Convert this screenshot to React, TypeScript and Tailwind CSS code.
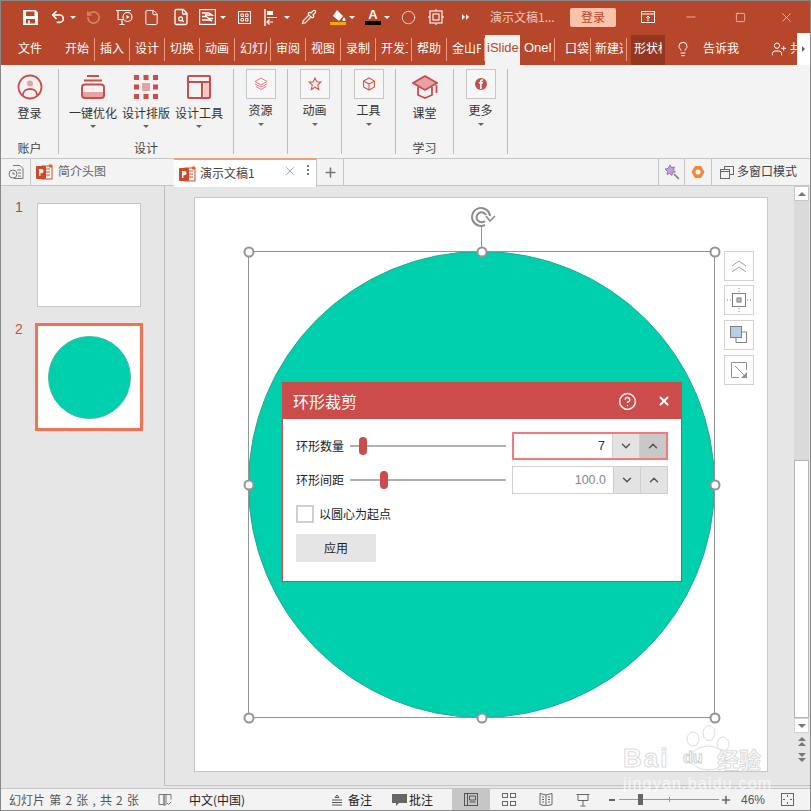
import React from 'react';
import { Undo2, RotateCcw, File, Pipette, Lightbulb, UserPlus, X, Minus, Square, Plus, ChevronDown, ChevronUp, CircleHelp, FileSearch, Circle } from 'lucide-react';

const font = 'font-["Noto_Sans_CJK_SC","Liberation_Sans",sans-serif]';
const latin = "font-['Liberation_Sans',sans-serif]";

const tabs = [
  { name: '开始', w: 'w-[35px]', clip: 'w-[24px]' },
  { name: '插入', w: 'w-[35px]', clip: 'w-[24px]' },
  { name: '设计', w: 'w-[35px]', clip: 'w-[24px]' },
  { name: '切换', w: 'w-[35px]', clip: 'w-[24px]' },
  { name: '动画', w: 'w-[35px]', clip: 'w-[24px]' },
  { name: '幻灯片', w: 'w-[36px]', clip: 'w-[27px]' },
  { name: '审阅', w: 'w-[35px]', clip: 'w-[24px]' },
  { name: '视图', w: 'w-[35px]', clip: 'w-[24px]' },
  { name: '录制', w: 'w-[35px]', clip: 'w-[24px]' },
  { name: '开发工具', w: 'w-[36px]', clip: 'w-[27px]' },
  { name: '帮助', w: 'w-[35px]', clip: 'w-[24px]' },
  { name: '金山PDF', w: 'w-[38px]', clip: 'w-[29px]' },
];

function Caret({ className = 'border-t-[#fff]' }: { className?: string }) {
  return <span className={`w-0 h-0 border-x-[3px] border-x-transparent border-t-[3px] ${className}`} />;
}

function QuickIcon({ className = '', children }: { className?: string; children?: React.ReactNode }) {
  return (
    <div className={`flex items-center justify-center w-[14px] h-full shrink-0 [&>*]:shrink-0 ${className}`}>
      {children}
    </div>
  );
}

function TitleBar() {
  return (
    <div className="flex items-center h-[32px] pl-[22px] bg-[#b7472a] text-white shrink-0">
      <QuickIcon>
        <svg width="15" height="15" viewBox="0 0 15 15" fill="white" fillRule="evenodd">
          <path d="M0 0h12.500L15 2.500V15H0zM3 1.500V6h8.500V1.500zM3 9v4.500h9V9z" />
          <rect x="5" y="10.500" width="2" height="3" />
        </svg>
      </QuickIcon>
      <QuickIcon className="ml-[14px]"><Undo2 size={16} strokeWidth={2.5} /></QuickIcon>
      <QuickIcon className="ml-[1px]"><Caret /></QuickIcon>
      <QuickIcon className="ml-[6px]"><RotateCcw size={15} strokeWidth={2.6} className="text-[#d5846e]" /></QuickIcon>
      <QuickIcon className="ml-[17px]">
        <svg width="17" height="17" viewBox="0 0 17 17" fill="none" stroke="white" strokeWidth="1.100">
          <path d="M0 1.500h15M2 1.500v9h6M6 10.500v5M3.500 15.500h5" />
          <circle cx="11.500" cy="8" r="4.500" fill="#b7472a" />
          <path d="M10.500 6l3 2-3 2z" fill="white" stroke="none" />
        </svg>
      </QuickIcon>
      <QuickIcon className="ml-[13px]"><File size={17} strokeWidth={1.4} /></QuickIcon>
      <QuickIcon className="ml-[16px]"><FileSearch size={18} strokeWidth={1.7} /></QuickIcon>
      <QuickIcon className="ml-[12px]">
        <svg width="17" height="16" viewBox="0 0 17 16" fill="none" stroke="white" strokeWidth="1.200">
          <rect x=".6" y=".6" width="15.800" height="14.800" />
          <path d="M3 4h7l3 2H6M3 7.500h4l3 2H14M3 11h8l2 1" strokeWidth="1.400" />
        </svg>
      </QuickIcon>
      <QuickIcon className="ml-[2px]"><Caret /></QuickIcon>
      <QuickIcon className="ml-[7px]">
        <svg width="13" height="13" viewBox="0 0 13 13" fill="none" stroke="white">
          <rect x=".5" y=".5" width="12" height="12" />
          <path d="M3 3h2.500v2.500H3zM7.500 3H10v2.500H7.500zM3 7.500h2.500V10H3zM7.500 7.500H10V10H7.500z" />
        </svg>
      </QuickIcon>
      <QuickIcon className="ml-[12px]">
        <svg width="13" height="17" viewBox="0 0 13 17" fill="none" stroke="white">
          <path d="M1 0v17" strokeWidth="1.400" />
          <path d="M3 2h6v4H3zM3 8h10v1H3z" fill="white" stroke="none" />
          <path d="M9 13H3M5.500 10.500L3 13l2.500 2.500" strokeWidth="1.200" />
        </svg>
      </QuickIcon>
      <QuickIcon className="ml-[3px]"><Caret /></QuickIcon>
      <QuickIcon className="ml-[8px]"><Pipette size={16} strokeWidth={1.7} /></QuickIcon>
      <QuickIcon className="ml-[15px]">
        <div className="flex flex-col items-center">
          <svg width="15" height="11" viewBox="0 0 15 11" fill="white"><path d="M6 0l6 6-4 5-6-5zM13 7c1 1.500 1.500 2 1.500 3a1.400 1.400 0 0 1-3 0c0-1 .6-1.500 1.500-3z" /></svg>
          <span className="w-4 h-[3px] bg-[#f5a800] mt-px" />
        </div>
      </QuickIcon>
      <QuickIcon><Caret /></QuickIcon>
      <QuickIcon className="ml-[7px]">
        <div className="flex flex-col items-center leading-none">
          <span className={`text-[13px] font-bold h-[12px] leading-[12px] ${latin}`}>A</span>
          <span className="w-4 h-[4px] bg-black" />
        </div>
      </QuickIcon>
      <QuickIcon><Caret /></QuickIcon>
      <QuickIcon className="ml-[7px]"><Circle size={15} strokeWidth={1.2} /></QuickIcon>
      <QuickIcon className="ml-[14px]">
        <svg width="16" height="16" viewBox="0 0 16 16" fill="none" stroke="white" strokeWidth="1.100">
          <rect x="2" y="2" width="12" height="12" />
          <rect x="5" y="5" width="6" height="6" />
          <path d="M8 0v2M8 14v2M0 8h2M14 8h2" />
        </svg>
      </QuickIcon>
      <QuickIcon className="ml-[15px]">
        <div className="flex">
          <span className="w-0 h-0 border-y-[3px] border-y-transparent border-l-[3px] border-l-white" />
          <span className="ml-px w-0 h-0 border-y-[3px] border-y-transparent border-l-[3px] border-l-white" />
        </div>
      </QuickIcon>
      <span className={`ml-[18px] w-[65px] text-[12px] text-[#f3c6b8] whitespace-nowrap ${font}`}>演示文稿1...</span>
      <div className={`ml-[15px] w-[46px] h-[19px] rounded-[2px] bg-[#fdc3aa] text-[#b7472a] text-[12px] flex items-center justify-center ${font}`}>登录</div>
      <div className="w-[64px] flex justify-center shrink-0">
        <svg width="14" height="12" viewBox="0 0 14 12" fill="none" stroke="white" strokeWidth="1">
          <rect x=".5" y=".5" width="13" height="11" />
          <path d="M.5 3h13M7 10V5.500M5 7l2-2 2 2" />
        </svg>
      </div>
      <div className="w-[21px] flex justify-center shrink-0"><Minus size={14} strokeWidth={1} /></div>
      <div className="w-[79px] flex justify-center shrink-0"><Square size={11} strokeWidth={1.2} /></div>
      <div className="w-[13px] flex justify-center shrink-0"><X size={15} strokeWidth={1} className="shrink-0" /></div>
    </div>
  );
}

function TabSep() {
  return <span className="absolute right-0 top-[5px] h-[23px] w-px bg-[#ee9a80]" />;
}

function TabStrip() {
  return (
    <div className={`flex items-stretch h-[32px] bg-[#b7472a] text-white text-[12px] shrink-0 ${font}`}>
      <div className="w-[59px] pl-[17px] pt-[7px] leading-[16px] shrink-0">文件</div>
      {tabs.map(t => (
        <div key={t.name} className={`relative shrink-0 pl-[5px] pt-[7px] leading-[16px] ${t.w}`}>
          <div className={`overflow-hidden whitespace-nowrap ${t.clip}`}>{t.name}</div>
          <TabSep />
        </div>
      ))}
      <div className={`w-[35px] mt-[2px] pl-[2px] pt-[5px] leading-[16px] bg-[#f3f3f3] text-[#b7472a] overflow-hidden whitespace-nowrap shrink-0 text-[13px] ${latin}`}>iSlide</div>
      <div className={`relative w-[35px] pl-[4px] pt-[7px] leading-[16px] shrink-0 text-[13px] ${latin}`}>
        <div className="w-[27px] overflow-hidden whitespace-nowrap">OneNote</div>
        <TabSep />
      </div>
      <div className="relative w-[36px] pl-[10px] pt-[7px] leading-[16px] shrink-0">
        <div className="w-[24px] overflow-hidden whitespace-nowrap">口袋动画</div>
        <TabSep />
      </div>
      <div className="relative w-[36px] pl-[4px] pt-[7px] leading-[16px] shrink-0">
        <div className="w-[28px] overflow-hidden whitespace-nowrap">新建选项卡</div>
        <TabSep />
      </div>
      <div className="ml-[4px] w-[34px] mt-[2px] pl-[3px] pt-[5px] leading-[16px] bg-[#943720] shrink-0">
        <div className="w-[28px] overflow-hidden whitespace-nowrap">形状格式</div>
      </div>
      <Lightbulb size={16} strokeWidth={1.5} className="ml-[10px] mt-[8px] shrink-0" />
      <div className="ml-[12px] w-[50px] pt-[7px] leading-[16px] shrink-0">告诉我</div>
      <UserPlus size={16} strokeWidth={1.5} className="ml-[18px] mt-[8px] shrink-0" />
      <div className="ml-[3px] w-[7px] pt-[7px] leading-[16px] overflow-hidden whitespace-nowrap shrink-0">共享</div>
      <div className="w-[13px] bg-white flex items-center justify-center shrink-0">
        <span className="w-0 h-0 border-y-[3px] border-y-transparent border-l-[3px] border-l-[#666]" />
      </div>
    </div>
  );
}

function RibbonItem({ label, className, caret = false, box = false, children }: { label: string; className: string; caret?: boolean; box?: boolean; children: React.ReactNode }) {
  return (
    <div className={`flex flex-col items-center shrink-0 ${className}`}>
      <div className={`flex items-center justify-center ${box ? 'h-[30px]' : 'h-[36px]'}`}>{children}</div>
      <div className={`text-[12px] leading-[16px] whitespace-nowrap text-[#333] ${box ? 'mt-[3px]' : ''}`}>{label}</div>
      {caret && <span className={box ? 'mt-[5px]' : 'mt-[4px]'}><Caret className="border-t-[#666] block" /></span>}
    </div>
  );
}

function BoxIcon({ children }: { children: React.ReactNode }) {
  return <div className="w-[30px] h-[30px] border border-[#c6c6c6] flex items-center justify-center bg-[#f7f7f7]">{children}</div>;
}

function RibbonGroup({ className, label, children }: { className: string; label?: string; children: React.ReactNode }) {
  return (
    <div className={`relative flex flex-col shrink-0 border-r border-[#bdbdbd] my-[4px] h-[85px] ${className}`}>
      <div className="flex justify-center">{children}</div>
      {label && <div className="absolute bottom-[-2px] left-0 right-0 text-center text-[12px] leading-[16px] text-[#444]">{label}</div>}
    </div>
  );
}

function Ribbon() {
  return (
    <div className={`flex h-[93px] bg-[#f3f3f3] shrink-0 ${font}`}>
      <RibbonGroup className="w-[58px]" label="账户">
        <RibbonItem label="登录" className="w-[50px]">
          <svg width="26" height="26" viewBox="0 0 26 26" fill="none" stroke="#cc4b4b" strokeWidth="1.800">
            <circle cx="13" cy="13" r="11.500" />
            <circle cx="13" cy="9.500" r="3" fill="#e6a3a3" stroke="none" />
            <path d="M6 21c0-8 14-8 14 0" />
          </svg>
        </RibbonItem>
      </RibbonGroup>
      <RibbonGroup className="w-[175px]" label="设计">
        <RibbonItem label="一键优化" className="w-[53px]" caret>
          <svg width="26" height="26" viewBox="0 0 26 26" fill="none" stroke="#cc4b4b" strokeWidth="2">
            <path d="M7 2h12M4 6.500h18" />
            <path d="M2 18h22v4a2 2 0 0 1-2 2H4a2 2 0 0 1-2-2z" fill="#e6a3a3" stroke="none" />
            <rect x="2" y="10.500" width="22" height="13.500" rx="3" />
          </svg>
        </RibbonItem>
        <RibbonItem label="设计排版" className="w-[53px]" caret>
          <svg width="24" height="24" viewBox="0 0 24 24" fill="#cc4b4b">
            <path d="M0 0h5v5H0zM9.500 0h5v5h-5zM19 0h5v5h-5zM0 9.500h5v5H0zM19 9.500h5v5h-5zM0 19h5v5H0zM9.500 19h5v5h-5zM19 19h5v5h-5z" />
            <rect x="8" y="8" width="8" height="8" fill="#e6a3a3" />
          </svg>
        </RibbonItem>
        <RibbonItem label="设计工具" className="w-[53px]" caret>
          <svg width="26" height="26" viewBox="0 0 26 26" fill="none" stroke="#cc4b4b" strokeWidth="2">
            <rect x="18" y="7" width="6" height="17" fill="#f0c8c8" stroke="none" />
            <rect x="2" y="2" width="22" height="22" rx="1" />
            <path d="M2 8h22M16 8v16" />
          </svg>
        </RibbonItem>
      </RibbonGroup>
      <RibbonGroup className="w-[54px]">
        <RibbonItem label="资源" className="w-[53px]" caret box>
          <BoxIcon>
            <svg width="14" height="14" viewBox="0 0 14 14" fill="none" stroke="#e07a7a" strokeWidth="1">
              <path d="M7 1l6 3.500-6 3.500-6-3.500zM1 7l6 3 6-3M2 9.500l5 3 5-3" />
            </svg>
          </BoxIcon>
        </RibbonItem>
      </RibbonGroup>
      <RibbonGroup className="w-[54px]">
        <RibbonItem label="动画" className="w-[53px]" caret box>
          <BoxIcon>
            <svg width="14" height="14" viewBox="0 0 14 14" fill="none" stroke="#d9534f" strokeWidth="1.100">
              <path d="M7 1l1.800 4h4.200l-3.300 3 1 4.500L7 10.200 3.300 12.500l1-4.500L1 5h4.200z" />
            </svg>
          </BoxIcon>
        </RibbonItem>
      </RibbonGroup>
      <RibbonGroup className="w-[54px]">
        <RibbonItem label="工具" className="w-[53px]" caret box>
          <BoxIcon>
            <svg width="14" height="14" viewBox="0 0 14 14" fill="none" stroke="#d9534f" strokeWidth="1.100">
              <path d="M7 1l5.500 3v6L7 13l-5.500-3V4zM1.500 4L7 7l5.500-3M7 7v6" />
            </svg>
          </BoxIcon>
        </RibbonItem>
      </RibbonGroup>
      <RibbonGroup className="w-[58px]" label="学习">
        <RibbonItem label="课堂" className="w-[57px]">
          <svg width="26" height="26" viewBox="0 0 26 26" fill="none">
            <path d="M13 2l12 7-12 7-12-7z" fill="#e6a3a3" stroke="#cc4b4b" strokeWidth="1.800" />
            <path d="M6 13v8l7 3 7-3v-8M24.500 11v8" stroke="#cc4b4b" strokeWidth="1.800" />
          </svg>
        </RibbonItem>
      </RibbonGroup>
      <RibbonGroup className="w-[54px]">
        <RibbonItem label="更多" className="w-[53px]" caret box>
          <BoxIcon>
            <svg width="14" height="14" viewBox="0 0 14 14">
              <circle cx="7" cy="7" r="6" fill="#cc4b4b" />
              <path d="M6 12V6.500H4.800V5H6c0-2 1-3 3-2.600v1.300c-1 0-1.300.2-1.300 1.300h1.300v1.500H7.700V12z" fill="white" />
            </svg>
          </BoxIcon>
        </RibbonItem>
      </RibbonGroup>
    </div>
  );
}

function PptBadge() {
  return (
    <svg width="17" height="16" viewBox="0 0 17 16" className="shrink-0">
      <rect x="6" y="2" width="10" height="13" fill="#fff" stroke="#d24726" strokeWidth="1" />
      <path d="M10 5h4M10 8h4M10 11h4" stroke="#d24726" />
      <rect x="0" y="2" width="10" height="13" rx="1" fill="#d24726" />
      <path d="M3 12V5h2.500a2 2 0 0 1 0 4.200H4.400V12z" fill="white" />
      <circle cx="14.500" cy="2" r="1.800" fill="#f15a24" />
    </svg>
  );
}

function DocTabs() {
  return (
    <div className={`flex h-[28px] bg-[#f3f3f3] border-y border-[#c6c6c6] text-[12px] shrink-0 ${font}`}>
      <div className="w-[30px] flex items-center justify-center border-r border-[#c6c6c6] shrink-0">
        <svg width="16" height="16" viewBox="0 0 16 16" fill="none" stroke="#777">
          <path d="M5 1.500h7l3 3v10H6" />
          <circle cx="5" cy="10" r="4" fill="#f3f3f3" />
          <path d="M5 8v2h2M9 6h4M10 9h3M10 12h3" />
        </svg>
      </div>
      <div className="w-[143px] flex items-center pl-[5px] gap-[5px] text-[#666] shrink-0">
        <PptBadge /><span className="-mt-[2px]">简介头图</span>
      </div>
      <div className="w-[143px] -mt-px h-[29px] flex items-center pl-[5px] bg-white border-t-[2px] border-[#f0a07a] border-r border-r-[#c6c6c6] text-[#444] relative shrink-0">
        <PptBadge /><span className="ml-[4px] -mt-[2px]">演示文稿1</span>
        <X size={14} strokeWidth={1} className="absolute left-[109px] top-[4px] text-[#666]" />
        <span className="absolute left-[133px] top-[5px] flex flex-col gap-[2px]">
          <span className="w-[2px] h-[2px] bg-[#777]" /><span className="w-[2px] h-[2px] bg-[#777]" /><span className="w-[2px] h-[2px] bg-[#777]" />
        </span>
      </div>
      <div className="w-[27px] flex items-center justify-center border-r border-[#c6c6c6] shrink-0">
        <Plus size={15} strokeWidth={2.5} className="text-[#777]" />
      </div>
      <div className="w-[314px] shrink-0" />
      <div className="w-[27px] flex items-center justify-center border-x border-[#c6c6c6] shrink-0">
        <svg width="16" height="16" viewBox="0 0 16 16">
          <path d="M6 1l1.500 2.500 3-.5-1 3 2 2-3 .5-.5 3-2.500-2-2.500 1 .5-3L1 5l3-.5z" fill="#c79be8" stroke="#777" strokeWidth=".8" />
          <path d="M10 10l5 5" stroke="#777" strokeWidth="1.500" />
        </svg>
      </div>
      <div className="w-[27px] flex items-center justify-center border-r border-[#c6c6c6] shrink-0">
        <svg width="14" height="14" viewBox="0 0 14 14">
          <path d="M4 1h6l3.500 6-3.500 6H4L.500 7z" fill="#ee8a3c" />
          <circle cx="7" cy="7" r="2.500" fill="#f3f3f3" />
        </svg>
      </div>
      <div className="flex items-center pl-[8px] gap-[3px] text-[#444]">
        <svg width="14" height="13" viewBox="0 0 14 13" fill="#f3f3f3" stroke="#666">
          <rect x="4.500" y=".5" width="9" height="8" />
          <rect x=".5" y="3.500" width="9" height="9" />
          <path d="M.5 5.500h9" />
        </svg>
        <span className="-mt-[2px]">多窗口模式</span>
      </div>
    </div>
  );
}

function SlideThumbs() {
  return (
    <div className="relative w-[164px] border-r border-[#bdbdbd] shrink-0">
      <span className={`absolute left-[14px] top-[11px] text-[14px] leading-[20px] text-[#666] ${latin}`}>1</span>
      <div className="absolute left-[36px] top-[17px] w-[104px] h-[104px] bg-white border border-[#c6c6c6]" />
      <span className={`absolute left-[14px] top-[133px] text-[14px] leading-[20px] text-[#e0492c] ${latin}`}>2</span>
      <div className="absolute left-[34px] top-[137px] w-[108px] h-[108px] bg-white border-[3px] border-[#f27252] flex items-center justify-center">
        <div className="w-[83px] h-[83px] rounded-full bg-[#00cfad] border border-[#3fb9a5]" />
      </div>
    </div>
  );
}

function Handle({ className }: { className: string }) {
  return <span className={`absolute w-[11px] h-[11px] -translate-x-1/2 -translate-y-1/2 rounded-full bg-white border-[2px] border-[#949494] ${className}`} />;
}

function SideButton({ children }: { children: React.ReactNode }) {
  return <div className="w-[30px] h-[30px] border border-[#d2d2d2] bg-white flex items-center justify-center">{children}</div>;
}

function Stepper({ value, active }: { value: string; active?: boolean }) {
  const line = active ? 'border-[#f27a7a] border-[2px]' : 'border-[#cfcfcf] border';
  return (
    <div className={`flex h-[28px] w-[156px] bg-white ${line} shrink-0`}>
      <div className={`flex-1 flex items-center justify-end pr-[7px] text-[12.5px] ${latin} ${active ? 'text-[#333]' : 'text-[#888]'}`}>{value}</div>
      <div className="w-[27px] bg-[#e3e3e3] border-l border-[#cfcfcf] flex items-center justify-center text-[#555]"><ChevronDown size={14} strokeWidth={2.5} /></div>
      <div className={`w-[27px] border-l border-[#cfcfcf] flex items-center justify-center text-[#555] ${active ? 'bg-[#c8c8c8]' : 'bg-[#e3e3e3]'}`}><ChevronUp size={14} strokeWidth={2.5} /></div>
    </div>
  );
}

function SliderRow({ label, value, thumb, active }: { label: string; value: string; thumb: string; active?: boolean }) {
  return (
    <div className="flex items-center h-[28px]">
      <span className="w-[54px] text-[12px] text-[#222] shrink-0">{label}</span>
      <div className="relative w-[156px] h-[2px] bg-[#b0b0b0] shrink-0">
        <span className={`absolute top-[-8px] w-[8px] h-[18px] rounded-full bg-[#cc4b4b] ${thumb}`} />
      </div>
      <div className="ml-[6px]"><Stepper value={value} active={active} /></div>
    </div>
  );
}

function RingDialog() {
  return (
    <div className={`absolute left-[116px] top-[196px] w-[400px] h-[200px] bg-white border border-[#cc4b4b] ${font}`}>
      <div className="flex items-center h-[36px] bg-[#cc4b4b] text-white pl-[10px]">
        <span className="text-[16px] w-[64px]">环形裁剪</span>
        <CircleHelp size={19} strokeWidth={1.8} className="ml-[261px]" />
        <X size={14} strokeWidth={3.5} className="ml-[20px]" />
      </div>
      <div className="pl-[13px] pt-[13px]">
        <div className="flex flex-col gap-[6px]">
          <SliderRow label="环形数量" value="7" thumb="left-[9px]" active />
          <SliderRow label="环形间距" value="100.0" thumb="left-[30px]" />
        </div>
        <div className="flex items-center mt-[11px] text-[12px] text-[#222]">
          <span className="w-[18px] h-[18px] border-[2px] border-[#cfcfcf] bg-white" />
          <span className="ml-[5px]">以圆心为起点</span>
        </div>
        <div className="mt-[11px] w-[80px] h-[28px] bg-[#e5e5e5] flex items-center justify-center text-[12px] text-[#222]">应用</div>
      </div>
    </div>
  );
}

function SlideCanvas() {
  return (
    <div className="relative flex-1 ml-px">
      <div className="absolute left-[28px] top-[11px] w-[574px] h-[575px] bg-white border border-[#c6c6c6]" />
      {/* slide contents sit on a free canvas */}
      <div className="absolute left-[82px] top-[65px] w-[467px] h-[467px] rounded-full bg-[#00cfad] border border-[#2ba893]" />
      <div className="absolute left-[82px] top-[65px] w-[467px] h-[467px] border border-[#949494]" />
      <span className="absolute left-[315px] top-[40px] w-px h-[25px] bg-[#949494]" />
      <svg width="26" height="22" viewBox="0 0 26 22" fill="none" stroke="#8c8c8c" strokeWidth="2" className="absolute left-[305px] top-[20px]">
        <path d="M14 19A9 9 0 1 1 19 10" />
        <path d="M14 15A5 5 0 1 1 15 9" />
        <path d="M15 10l4 5 5-5" strokeWidth="1.600" />
      </svg>
      <Handle className="left-[82.5px] top-[65.5px]" />
      <Handle className="left-[315.5px] top-[65.5px]" />
      <Handle className="left-[548.5px] top-[65.5px]" />
      <Handle className="left-[82.5px] top-[298.5px]" />
      <Handle className="left-[548.5px] top-[298.5px]" />
      <Handle className="left-[82.5px] top-[531.5px]" />
      <Handle className="left-[315.5px] top-[531.5px]" />
      <Handle className="left-[548.5px] top-[531.5px]" />
      <div className="absolute left-[558px] top-[65px] flex flex-col gap-[5px]">
        <div className="-mb-px">
          <SideButton>
            <svg width="18" height="16" viewBox="0 0 18 16" fill="none" stroke="#a0a0a0"><path d="M2 8l7-5 7 5M2 14l7-5 7 5" /></svg>
          </SideButton>
        </div>
        <SideButton>
          <svg width="24" height="24" viewBox="0 0 24 24" fill="none" stroke="#808080">
            <rect x="5.500" y="5.500" width="13" height="13" />
            <rect x="10" y="10" width="4" height="4" fill="#bdbdbd" />
            <path d="M12 0v4M12 20v4M0 12h4M20 12h4" strokeDasharray="1 2" />
          </svg>
        </SideButton>
        <SideButton>
          <svg width="18" height="18" viewBox="0 0 18 18" fill="none" stroke="#808080">
            <path d="M11 6h5.500v10.500H6V12" />
            <rect x=".5" y=".5" width="11" height="11" fill="#b8cfe6" />
          </svg>
        </SideButton>
        <SideButton>
          <svg width="18" height="18" viewBox="0 0 18 18" fill="none" stroke="#909090">
            <path d="M16.500 9V1.500h-15v15H9" />
            <path d="M5 5l9 9" />
            <path d="M17 11v6h-6z" fill="#909090" stroke="none" />
          </svg>
        </SideButton>
      </div>
      <RingDialog />
    </div>
  );
}

function Scrollbar() {
  return (
    <div className="w-[15px] mr-px flex flex-col shrink-0 items-stretch">
      <div className="h-[15px] bg-white border border-[#c6c6c6] flex items-center justify-center">
        <span className="w-0 h-0 border-x-[4px] border-x-transparent border-b-[4px] border-b-[#777]" />
      </div>
      <div className="h-[259px] bg-[#dadada]" />
      <div className="h-[258px] bg-white border border-[#b5b5b5]" />
      <div className="h-[15px] bg-white border border-[#d2d2d2] flex items-center justify-center">
        <span className="w-0 h-0 border-x-[4px] border-x-transparent border-t-[4px] border-t-[#777]" />
      </div>
      <div className="flex flex-col items-center mt-[4px] gap-[7px]">
        <span className="flex flex-col items-center gap-px">
          <span className="w-0 h-0 border-x-[4px] border-x-transparent border-b-[4px] border-b-[#777]" />
          <span className="w-0 h-0 border-x-[4px] border-x-transparent border-b-[4px] border-b-[#777]" />
        </span>
        <span className="flex flex-col items-center gap-px">
          <span className="w-0 h-0 border-x-[4px] border-x-transparent border-t-[4px] border-t-[#777]" />
          <span className="w-0 h-0 border-x-[4px] border-x-transparent border-t-[4px] border-t-[#777]" />
        </span>
      </div>
    </div>
  );
}

function StatusBar() {
  return (
    <div className={`flex items-center h-[23px] bg-[#f3f3f3] border-t border-[#c6c6c6] border-b border-b-[#888] text-[12px] text-[#555] shrink-0 ${font}`}>
      <span className="ml-[8px] w-[149px] whitespace-nowrap [word-spacing:1.5px]">幻灯片 第 2 张 , 共 2 张</span>
      <svg width="14" height="14" viewBox="0 0 14 14" fill="none" stroke="#777" className="shrink-0">
        <path d="M1 1.500h5v10H1zM8 1.500h5v5M6 1.500l2 0v10l-2 1z" />
        <path d="M9 10l1.500 1.500L13 9" />
      </svg>
      <span className="ml-[17px] w-[142px] text-[#222] whitespace-nowrap">中文(中国)</span>
      <svg width="12" height="12" viewBox="0 0 12 12" fill="none" stroke="#555" className="shrink-0">
        <path d="M6 1l2 2.500H4zM1 6h10M1 8.500h10M1 11h10" />
      </svg>
      <span className="ml-[5px] w-[32px] text-[#222]">备注</span>
      <svg width="15" height="14" viewBox="0 0 15 14" fill="#666" className="ml-[12px] shrink-0"><path d="M0 1h15v9H7l-3 3v-3H0z" /></svg>
      <span className="ml-[2px] w-[43px] text-[#222]">批注</span>
      <div className="w-[38px] h-full bg-[#c6c6c6] flex items-center justify-center shrink-0">
        <svg width="14" height="13" viewBox="0 0 14 13" fill="none" stroke="#555"><rect x=".5" y=".5" width="13" height="12" /><path d="M3.500 .5v12M5.500 3h6v4h-6zM5.500 9h6" /></svg>
      </div>
      <div className="w-[37px] flex justify-center shrink-0">
        <svg width="14" height="13" viewBox="0 0 14 13" fill="none" stroke="#666"><rect x=".5" y=".5" width="5" height="4" /><rect x="8.500" y=".5" width="5" height="4" /><rect x=".5" y="8.500" width="5" height="4" /><rect x="8.500" y="8.500" width="5" height="4" /></svg>
      </div>
      <div className="w-[38px] flex justify-center shrink-0">
        <svg width="14" height="13" viewBox="0 0 14 13" fill="none" stroke="#666"><path d="M7 2L1 .5v11L7 13l6-1.500V.5zM7 2v11M3 4h2M3 6.500h2M3 9h2M9 4h2M9 6.500h2M9 9h2" /></svg>
      </div>
      <div className="w-[36px] flex justify-center shrink-0">
        <svg width="14" height="14" viewBox="0 0 14 14" fill="none" stroke="#666"><path d="M.5 1.500h13M2 1.500v6h10v-6M7 7.500v5M4.500 13h5" /></svg>
      </div>
      <div className="w-[6px] ml-[8px] h-[2px] bg-[#666] shrink-0" />
      <div className="relative w-[100px] ml-[4px] h-px bg-[#999] shrink-0">
        <span className="absolute left-[19px] top-[-5px] w-[5px] h-[11px] bg-[#666]" />
        <span className="absolute left-[50px] top-[-2px] w-px h-[5px] bg-[#999]" />
      </div>
      <Plus size={12} strokeWidth={3} className="ml-px text-[#666] shrink-0" />
      <span className={`ml-[9px] w-[36px] ${latin}`}>46%</span>
      <svg width="13" height="13" viewBox="0 0 13 13" fill="none" stroke="#666" className="ml-[4px] shrink-0">
        <rect x=".5" y=".5" width="12" height="12" />
        <path d="M6.500 2v2M6.500 9v2M2 6.500h2M9 6.500h2" />
      </svg>
    </div>
  );
}

function Watermark() {
  const stroke = '[-webkit-text-stroke:1px_#dcdcdc]';
  return (
    <div className={`absolute left-[622px] top-[724px] w-[150px] text-white/70 ${latin}`}>
      <svg width="60" height="46" viewBox="0 0 60 46" fill="rgba(255,255,255,.6)" stroke="#dcdcdc" className="absolute left-[50px] top-0">
        <ellipse cx="20" cy="14" rx="6" ry="7" />
        <ellipse cx="36" cy="8" rx="6" ry="7.500" />
        <ellipse cx="50" cy="19" rx="6" ry="7" />
        <ellipse cx="35" cy="33" rx="17" ry="12" />
      </svg>
      <div className="relative flex items-end h-[48px]">
        <span className={`text-[26px] leading-[30px] tracking-[2px] font-bold w-[60px] ${stroke}`}>Bai</span>
        <span className="text-[16px] leading-[30px] text-white font-bold w-[34px] [-webkit-text-stroke:1px_#d0d0d0]">du</span>
        <span className={`text-[22px] leading-[30px] font-bold ${stroke} ${font}`}>经验</span>
      </div>
      <div className="text-[16px] leading-[16px] tracking-[1.2px] mt-[3px] whitespace-nowrap">jingyan.baidu.com</div>
    </div>
  );
}

export default function App() {
  return (
    <div className="relative w-[811px] h-[811px] overflow-hidden bg-[#e6e6e6] flex flex-col border-x border-t border-[#888]">
      <TitleBar />
      <TabStrip />
      <Ribbon />
      <DocTabs />
      <div className="flex flex-1 min-h-0 mb-[2px]">
        <SlideThumbs />
        <div className="flex flex-1 min-w-0 border-b border-[#c6c6c6]">
          <SlideCanvas />
          <Scrollbar />
        </div>
      </div>
      <StatusBar />
      <Watermark />
    </div>
  );
}
